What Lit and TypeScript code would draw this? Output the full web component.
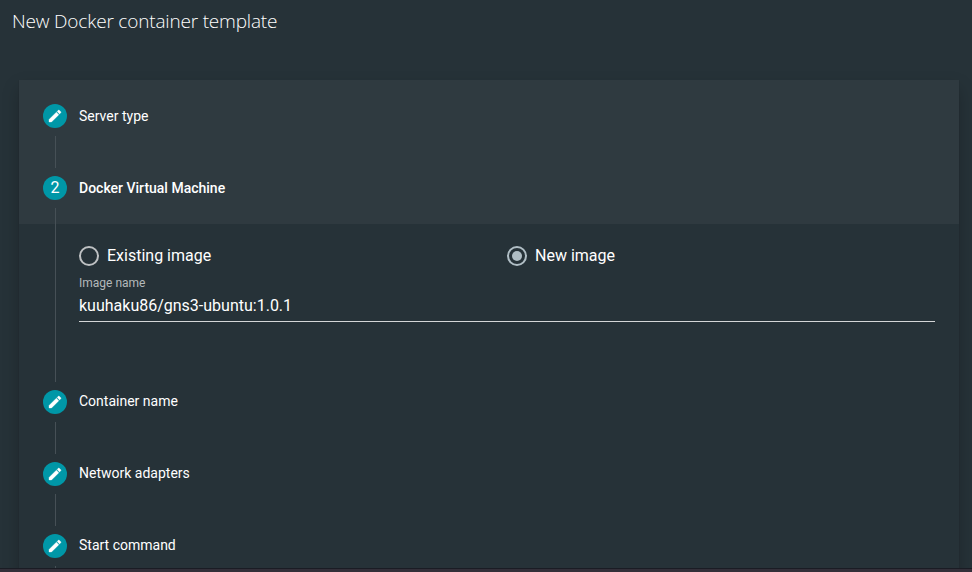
import { LitElement, html, css, svg } from "lit";
import { customElement, property } from "lit/decorators.js";

const pencil = svg`<path d="M3 17.25V21h3.75L17.81 9.94l-3.75-3.75L3 17.25zM20.71 7.04c.39-.39.39-1.02 0-1.41l-2.34-2.34c-.39-.39-1.02-.39-1.41 0l-1.83 1.83 3.75 3.75 1.83-1.83z"/>`;

@customElement("wizard-step")
class WizardStep extends LitElement {
  @property() label = "";
  @property() number = "";
  @property({ type: Boolean, reflect: true }) shaded = false;
  @property({ type: Boolean, reflect: true }) active = false;
  @property({ type: Boolean, reflect: true }) first = false;

  static styles = css`
    :host { display: block; }
    .header {
      display: grid;
      grid-template-columns: 24px 1fr;
      grid-template-rows: 16px 40px 16px;
      column-gap: 12px;
      align-items: center;
      height: 72px;
      padding: 0 24px;
      box-sizing: border-box;
    }
    :host([shaded]) .header { background: #2f3a40; }
    .line {
      grid-column: 1;
      width: 1px;
      height: 100%;
      margin-left: 12px;
      background: #465056;
    }
    :host([first]) .top { visibility: hidden; }
    .icon {
      grid-row: 2;
      grid-column: 1;
      width: 24px;
      height: 24px;
      border-radius: 50%;
      background: #0097a7;
      color: #fff;
      display: flex;
      align-items: center;
      justify-content: center;
      font-size: 16px;
      line-height: 24px;
    }
    svg { width: 16px; height: 16px; fill: #fff; stroke: #fff; stroke-width: .5; }
    .label { grid-row: 2; grid-column: 2; font-size: 14px; line-height: 20px; }
    :host(:not([shaded])) .label { padding-bottom: 2px; }
    :host([active]) .label { font-weight: 500; }
    .bottom { grid-row: 3; }
    .body { display: grid; grid-template-columns: 24px 1fr; column-gap: 12px; padding: 0 24px; }
  `;

  render() {
    return html`
      <div class="header">
        <div class="line top"></div>
        <div class="icon">${this.number ? this.number : html`<svg viewBox="0 0 24 24">${pencil}</svg>`}</div>
        <div class="label">${this.label}</div>
        <div class="line bottom"></div>
      </div>
      ${this.active ? html`<div class="body"><div class="line"></div><slot></slot></div>` : ""}
    `;
  }
}

@customElement("app-root")
class AppRoot extends LitElement {
  static styles = css`
    :host {
      display: flex;
      flex-direction: column;
      height: 572px;
      overflow: hidden;
      background: #263238;
      color: #fff;
      font-family: Roboto, sans-serif;
    }
    .page { flex: 1; min-height: 0; overflow: hidden; }
    h1 {
      margin: 0;
      padding: 7px 12px 0;
      height: 80px;
      box-sizing: border-box;
      font: 300 19px/28px "Open Sans", sans-serif;
      letter-spacing: -0.18px;
      white-space: nowrap;
    }
    .card {
      width: 940px;
      height: 560px;
      margin-left: 19px;
      background: #263238;
      box-shadow: 0 2px 1px -1px rgba(0,0,0,.2), 0 1px 1px rgba(0,0,0,.14), 0 8px 16px rgba(0,0,0,.22);
    }
    .content { height: 142px; padding-top: 22px; box-sizing: border-box; }
    .radios { display: grid; grid-template-columns: 1fr 1fr; }
    .radio { display: flex; align-items: center; gap: 8px; font-size: 16px; line-height: 20px; }
    .ring {
      width: 20px;
      height: 20px;
      box-sizing: border-box;
      border: 2px solid #bec1c3;
      border-radius: 50%;
      display: flex;
      align-items: center;
      justify-content: center;
    }
    .checked { border-color: #b0bec5; }
    .checked::after { content: ""; width: 10px; height: 10px; border-radius: 50%; background: #b0bec5; }
    .caption { margin-top: 9px; font-size: 12px; line-height: 16px; color: #b4b9bb; }
    .value { margin-top: 4px; height: 27px; font-size: 16px; line-height: 22px; border-bottom: 1px solid #d4d6d7; box-sizing: border-box; }
    .taskbar { height: 4px; box-sizing: border-box; border-top: 1px solid #1a1c24; background: #332f39; }
  `;

  render() {
    return html`
      <div class="page">
        <h1>New Docker container template</h1>
        <div class="card">
          <wizard-step label="Server type" shaded first></wizard-step>
          <wizard-step label="Docker Virtual Machine" number="2" shaded active>
            <div class="content">
              <div class="radios">
                <div class="radio"><span class="ring"></span>Existing image</div>
                <div class="radio"><span class="ring checked"></span>New image</div>
              </div>
              <div class="caption">Image name</div>
              <div class="value">kuuhaku86/gns3-ubuntu:1.0.1</div>
            </div>
          </wizard-step>
          <wizard-step label="Container name"></wizard-step>
          <wizard-step label="Network adapters"></wizard-step>
          <wizard-step label="Start command"></wizard-step>
        </div>
      </div>
      <div class="taskbar"></div>
    `;
  }
}
